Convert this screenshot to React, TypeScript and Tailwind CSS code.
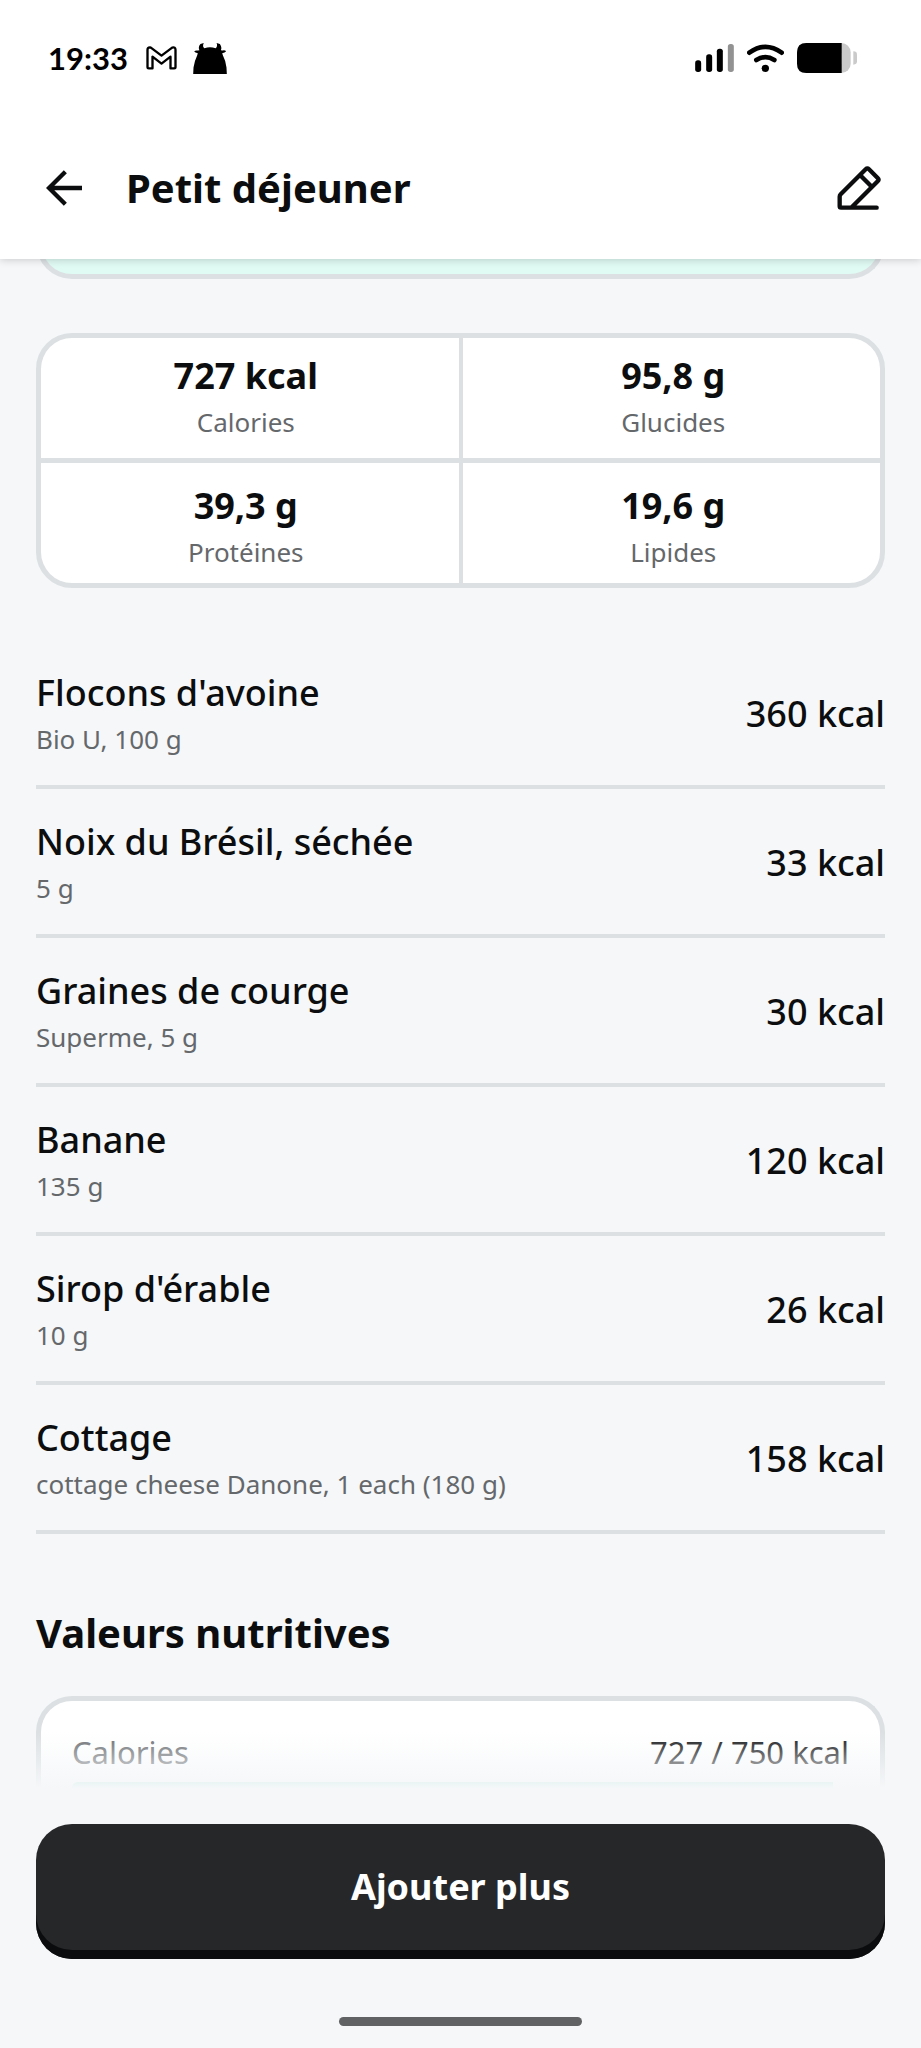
const MACROS = [
  { value: "727 kcal", label: "Calories", cell: "pt-3.5 pb-[17px] pr-2" },
  { value: "95,8 g", label: "Glucides", cell: "pt-3.5 pb-[17px] pl-1" },
  { value: "39,3 g", label: "Protéines", cell: "pt-[19px] pb-3 pr-2" },
  { value: "19,6 g", label: "Lipides", cell: "pt-[19px] pb-3 pl-1" },
];

const FOODS = [
  { name: "Flocons d'avoine", detail: "Bio U, 100 g", kcal: 360 },
  { name: "Noix du Brésil, séchée", detail: "5 g", kcal: 33 },
  { name: "Graines de courge", detail: "Superme, 5 g", kcal: 30 },
  { name: "Banane", detail: "135 g", kcal: 120 },
  { name: "Sirop d'érable", detail: "10 g", kcal: 26 },
  { name: "Cottage", detail: "cottage cheese Danone, 1 each (180 g)", kcal: 158 },
];

function MailIcon() {
  return (
    <svg viewBox="0 0 92 72" className="h-6 w-[31px]" fill="none" stroke="black" strokeWidth="7" strokeLinejoin="round">
      <path d="M4 63V11Q4 4 11 4L14 5L46 29L78 5Q88 2 88 11V63Q88 67 84 67H73V32L46 53L19 32V67H8Q4 67 4 63Z" />
    </svg>
  );
}

function BullIcon() {
  return (
    <svg viewBox="0 0 102 94" className="h-[31px] w-[34px]">
      <path d="M0 94L1 74Q5 52 12 38L14 31Q6 30 3 26Q7 21 14 23L19 22Q14 12 22 3L32 0Q27 11 34 16Q51 10 68 16Q75 10 71 0L81 3Q88 13 84 22L89 23Q96 21 100 25Q96 30 88 31L90 37Q98 52 101 74L102 94Z" />
    </svg>
  );
}

function SignalIcon() {
  return (
    <svg viewBox="0 0 116 84" className="h-7 w-[39px]">
      <rect x="0" y="49" width="18" height="35" rx="8" />
      <rect x="33" y="31" width="18" height="53" rx="8" />
      <rect x="65" y="14" width="18" height="70" rx="8" />
      <rect x="98" y="0" width="18" height="84" rx="8" fill="#929292" />
    </svg>
  );
}

function WifiIcon() {
  return (
    <svg viewBox="0 0 111 84" className="h-7 w-[37px]" fill="none" stroke="black" strokeWidth="14" strokeLinecap="round">
      <path d="M7 26Q55 -9 104 26" />
      <path d="M28 48Q55 31 82 48" />
      <circle cx="55" cy="73" r="11" fill="black" stroke="none" />
    </svg>
  );
}

function BatteryIcon() {
  return (
    <svg viewBox="0 0 180 90" className="h-[30px] w-[60px]">
      <rect x="0" y="0" width="161" height="90" rx="28" fill="#cacaca" />
      <path d="M28 0H134V90H28Q0 90 0 62V28Q0 0 28 0Z" />
      <path d="M169 25Q180 25 180 35V55Q180 65 169 65Z" fill="#cacaca" />
    </svg>
  );
}

function StatusBar() {
  return (
    <div className="flex h-[114px] items-center justify-between pt-0.5 pl-12 pr-16">
      <div className="flex items-center">
        <span className="font-['Lato',sans-serif] text-[31px] leading-10 font-bold text-black">19:33</span>
        <div className="ml-[18px] flex items-center gap-4">
          <MailIcon />
          <BullIcon />
        </div>
      </div>
      <div className="flex items-center gap-[13px]">
        <SignalIcon />
        <WifiIcon />
        <BatteryIcon />
      </div>
    </div>
  );
}

function Header() {
  return (
    <header className="relative z-10 bg-white shadow-[0_1px_8px_rgba(0,0,0,0.18)]">
      <StatusBar />
      <div className="flex h-[145px] items-center pt-0.5 pl-[46px] pr-10">
        <button type="button" aria-label="Retour" className="mr-11">
          <svg viewBox="0 0 108 108" className="size-9" fill="none" stroke="#0c0d0e" strokeWidth="13">
            <path d="M108 54H9M58 5L9 54L58 103" />
          </svg>
        </button>
        <h1 className="flex-1 text-[40px] leading-[54px] font-bold">Petit déjeuner</h1>
        <button type="button" aria-label="Modifier">
          <svg
            viewBox="0 0 132 132"
            className="size-11"
            fill="none"
            stroke="#0c0d0e"
            strokeWidth="13"
            strokeLinecap="round"
            strokeLinejoin="round"
          >
            <path d="M119 125H12Q8 125 8 121V92Q8 88 11 85L86 10Q91 5 96 10L122 36Q127 41 122 46L44 124" />
            <path d="M72 30L102 60" />
          </svg>
        </button>
      </div>
    </header>
  );
}

function MacroGrid() {
  return (
    <dl className="mt-[54px] grid grid-cols-2 gap-x-1 gap-y-[5px] overflow-hidden rounded-[36px] border-5 border-[#dce0e3] bg-[#dce0e3]">
      {MACROS.map((macro) => (
        <div key={macro.label} className={`flex flex-col-reverse bg-white text-center ${macro.cell}`}>
          <dt className="mt-[3px] text-[26px] leading-[38px] text-[#65686b]">{macro.label}</dt>
          <dd className="text-4xl leading-[48px] font-bold">{macro.value}</dd>
        </div>
      ))}
    </dl>
  );
}

function FoodList() {
  return (
    <ul className="mt-[52px]">
      {FOODS.map((food) => (
        <li
          key={food.name}
          className="flex items-center justify-between border-b-4 border-[#dce0e3] pt-[29px] pb-[27px]"
        >
          <div>
            <p className="text-4xl leading-[48px] font-medium">{food.name}</p>
            <p className="mt-[3px] text-[26px] leading-[38px] text-[#65686b]">{food.detail}</p>
          </div>
          <span className="text-4xl leading-[48px] font-medium">{food.kcal} kcal</span>
        </li>
      ))}
    </ul>
  );
}

function NutritionCard() {
  return (
    <section>
      <h2 className="mt-[72px] text-[40px] leading-[54px] font-bold">Valeurs nutritives</h2>
      <div className="relative mt-9 overflow-hidden">
        <div className="rounded-t-[36px] border-5 border-b-0 border-[#dce0e3] bg-white px-[31px] pt-[30px]">
          <div className="flex justify-between text-[31px] leading-[42px]">
            <span className="text-[#65686b]">Calories</span>
            <span>727 / 750 kcal</span>
          </div>
          <div className="mt-[9px] mr-4 h-1.5 rounded-tl-full bg-[#7fdcc4]" />
        </div>
        {/* scroll fade above the footer */}
        <div className="absolute inset-x-0 bottom-0 h-14 bg-linear-to-b from-[#f5f7f9]/0 to-[#f5f7f9]" />
      </div>
    </section>
  );
}

export default function App() {
  return (
    <div className="flex min-h-screen flex-col bg-[#f5f7f9] font-['Noto_Sans',sans-serif] text-[#0c0d0e]">
      <Header />
      <main className="px-9">
        {/* tail of the summary card scrolled under the header */}
        <div className="-mt-9 h-14 rounded-b-[36px] border-5 border-t-0 border-[#dce0e3] bg-[#e0fbf4]" />
        <MacroGrid />
        <FoodList />
        <NutritionCard />
      </main>
      <footer className="flex flex-col items-center px-9 pt-9 pb-[22px]">
        <button
          type="button"
          className="w-full rounded-[36px] bg-[#262729] pt-[39px] pb-12 text-4xl leading-[48px] font-bold text-white shadow-[inset_0_-9px_0_#0b0c0d]"
        >
          Ajouter plus
        </button>
        <div className="mt-[58px] h-[9px] w-[243px] rounded-full bg-[#606264]" />
      </footer>
    </div>
  );
}
